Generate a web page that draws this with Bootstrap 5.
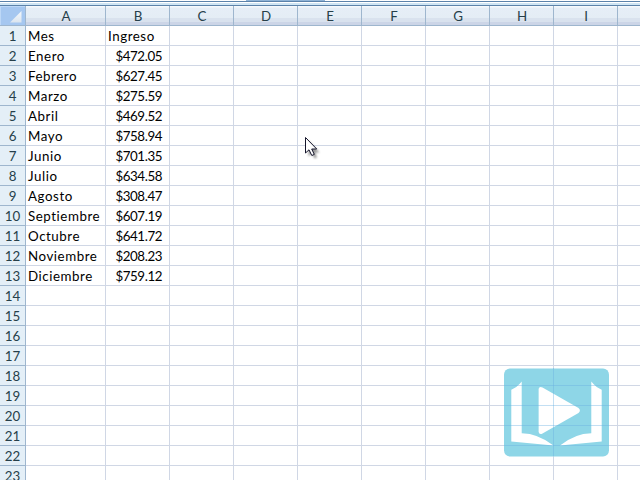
<!DOCTYPE html>
<html lang="es">
<head>
<meta charset="utf-8">
<meta name="viewport" content="width=device-width, initial-scale=1">
<title>Ingresos</title>
<link href="https://cdn.jsdelivr.net/npm/bootstrap@5.3.0/dist/css/bootstrap.min.css" rel="stylesheet">
<style>
body{width:640px;height:480px;font-family:Lato,"Liberation Sans",sans-serif;font-size:13.33px;line-height:17px;color:#000}
.ribbon-edge{height:6px;background:linear-gradient(#fff 0 1px,#5b82aa 1px 2px,#fff 2px 3px,#cfe5f4 3px 5px,#5d83aa 5px)}
.ribbon-tab{left:246px;top:0;width:79px;height:2px;background:linear-gradient(#8fb3d6 0 1px,#5b82aa 1px)}
.sheet{table-layout:fixed;width:682px;border-collapse:separate;border-spacing:0}
.sheet th,.sheet td{height:20px;padding:2px 0 0;border:0 solid #d0d7e5;border-width:0 1px 1px 0;white-space:nowrap;vertical-align:top;overflow:hidden}
.sheet th{font-weight:400;text-align:center;color:#263f4a;border-color:#9eb6ce}
.sheet thead th{padding-left:1px;background:linear-gradient(#f5f9fc 0 1px,#e6eef7 2px,#e4edf5 12px,#d9e2ee 12px 16px,#ccd5e7 16px)}
.sheet thead th:first-child{padding:0;background:#a5c7f0;box-shadow:inset 1px 1px #bdd8f7}
.sheet tbody th{background:#e4eff7}
.sheet td{letter-spacing:.55px;font-variant-ligatures:none}
.sheet td:nth-child(2){padding-left:2px}
.sheet td.amount{text-align:right;padding-right:7px;letter-spacing:-.43px}
.sheet td:nth-child(3):not(.amount){padding-left:2px}
.corner{display:block;margin:5px 0 0 9px}
.pointer{left:304px;top:136px}
.watermark{left:504px;top:368px}
</style>
<script src="https://cdn.jsdelivr.net/npm/bootstrap@5.3.0/dist/js/bootstrap.bundle.min.js"></script>
</head>
<body class="bg-white overflow-hidden position-relative m-0">
<div class="ribbon-edge"></div>
<div class="ribbon-tab position-absolute"></div>
<main class="overflow-hidden">
<table class="sheet">
<colgroup><col style="width:26px"><col style="width:80px"><col span="9" style="width:64px"></colgroup>
<thead><tr id="heads"><th><svg class="corner" width="13" height="12" viewBox="0 0 13 12"><defs><linearGradient id="cg" x1="0" y1="0" x2="0" y2="1"><stop stop-color="#f4f8fc"/><stop offset="1" stop-color="#dbe5ef"/></linearGradient></defs><path d="M12.5 0V11.5H1Z" fill="url(#cg)"/></svg></th></tr></thead>
<tbody id="rows"></tbody>
</table>
</main>
<svg class="pointer position-absolute" width="20" height="26" viewBox="0 0 20 26">
<defs><filter id="soft" x="-50%" y="-50%" width="200%" height="200%"><feGaussianBlur stdDeviation="1.2"/></filter></defs>
<path d="M4.500 4.500V20.500L8 17L10.500 22.500L13 21.500L11 16.500H15.500Z" fill="#000" opacity=".4" filter="url(#soft)"/>
<path d="M1.500 1.500V17L5 13.800L7.800 19.500L10.300 18.400L7.700 13H12.700Z" fill="#fff" stroke="#15152b"/>
</svg>
<svg class="watermark position-absolute" width="105" height="89" viewBox="0 0 105 89">
<rect y="0.500" width="105" height="88" rx="6" fill="#8ed6e7"/>
<path d="M7.300 21.700Q13 19.500 17.700 13.500V65.300Q34 65.500 49.500 77.600L7.300 73.600ZM97.700 21.700Q92 19.500 87.300 13.500V65.300Q71 65.500 56 77.600L97.700 73.600Z" fill="#fff"/>
<path d="M34.600 21Q35.300 18 38.500 19.500L74.500 40Q77.300 42.500 74.500 45L38.500 65.500Q35.300 67 34.600 64Z" fill="#fff"/>
<path d="M49.500 0V88M0 17.500H105M0 37.500H105M0 57.500H105M0 77.500H105" stroke="#6aaee0" stroke-opacity=".4" fill="none"/>
</svg>
<script>
const data=[["Mes","Ingreso"],["Enero","$472.05"],["Febrero","$627.45"],["Marzo","$275.59"],["Abril","$469.52"],["Mayo","$758.94"],["Junio","$701.35"],["Julio","$634.58"],["Agosto","$308.47"],["Septiembre","$607.19"],["Octubre","$641.72"],["Noviembre","$208.23"],["Diciembre","$759.12"]];
document.getElementById("heads").insertAdjacentHTML("beforeend",[..."ABCDEFGHI",""].map(c=>`<th>${c}</th>`).join(""));
let html="";
for(let i=0;i<23;i++){
  const [month="",value=""]=data[i]||[];
  html+=`<tr><th>${i+1}</th><td>${month}</td><td class="${value[0]==="$"?"amount":""}">${value}</td>${"<td></td>".repeat(8)}</tr>`;
}
document.getElementById("rows").innerHTML=html;
</script>
</body>
</html>
